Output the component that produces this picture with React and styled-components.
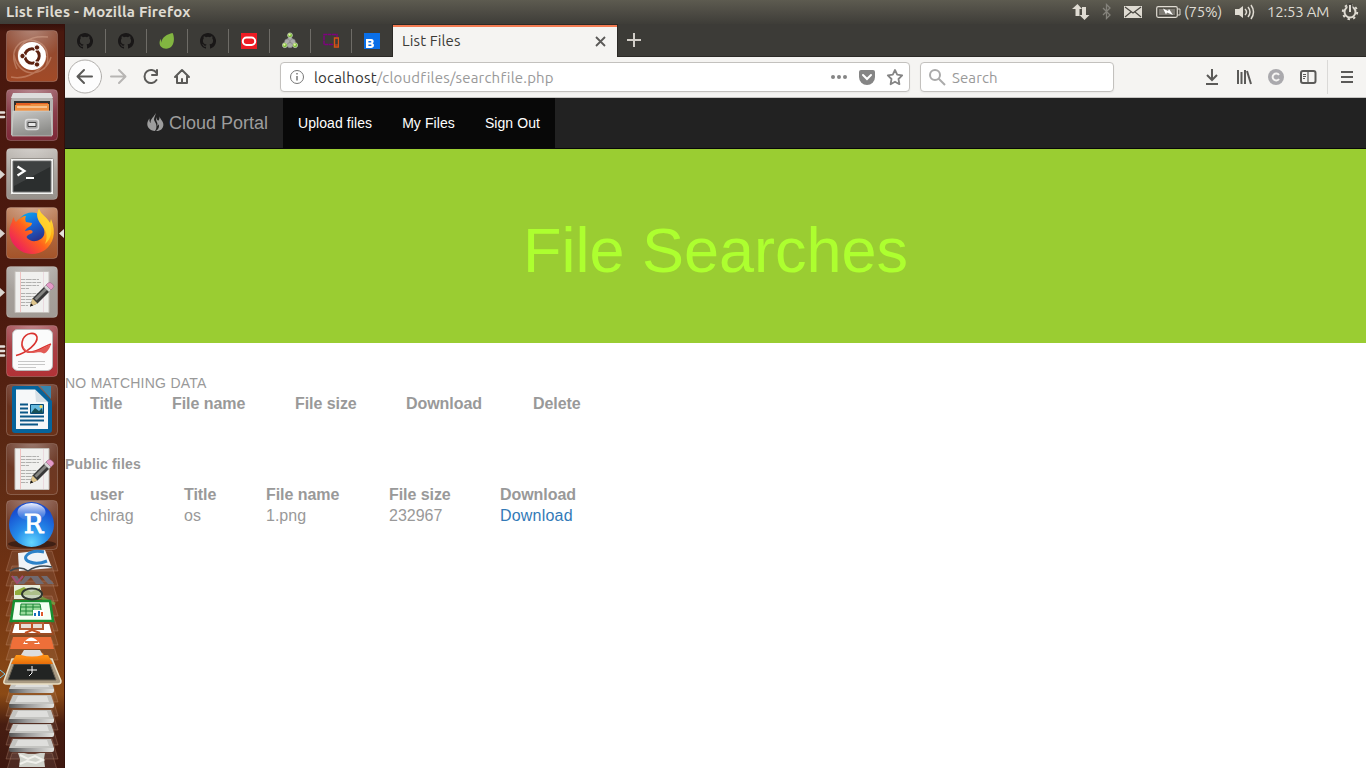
import React from "react";
import styled, { createGlobalStyle } from "styled-components";

const Global = createGlobalStyle`
  * { box-sizing: border-box; }
  body { margin: 0; background: #fff; overflow: hidden; }
  svg { display: block; flex: none; }
`;

const ui = `"Ubuntu", "Noto Sans", sans-serif`;
const page = `"Liberation Sans", Arial, sans-serif`;

const Desktop = styled.div`
  width: 1366px;
  height: 768px;
  display: flex;
  flex-direction: column;
`;
const Panel = styled.header`
  height: 24px;
  flex: none;
  display: flex;
  align-items: center;
  justify-content: space-between;
  padding: 0 7px 0 6px;
  background: linear-gradient(#5d5b50, #4c4a43 55%, #3e3d38);
  color: #dfdbd2;
  font: 15px/24px ${ui};
  white-space: nowrap;
`;
const WindowTitle = styled.span`
  font-weight: 700;
  letter-spacing: 0.18px;
`;
const Indicators = styled.div`
  display: flex;
  align-items: center;
`;
const Slot = styled.span`
  display: block;
  flex: none;
  width: ${(p) => p.$w}px;
  letter-spacing: ${(p) => p.$ls || 0}px;
`;
const Main = styled.div`
  display: flex;
  flex: 1;
  min-height: 0;
`;
const Dock = styled.nav`
  width: 65px;
  flex: none;
  padding-top: 6px;
  overflow: hidden;
  border-right: 1px solid #34110b;
  background: linear-gradient(#35100a 0, #49180e 8px, #4b190e 280px, #5c2a14 440px, #713313 560px, #8b4a15 670px, #471d11 700px, #3e1810);
`;
const DockItem = styled.div`
  height: ${(p) => p.$h || 59}px;
  display: flex;
`;
const Browser = styled.section`
  flex: 1;
  min-width: 0;
  display: flex;
  flex-direction: column;
`;
const TabStrip = styled.div`
  height: 33px;
  flex: none;
  display: flex;
  background: #3c3b37;
  box-shadow: inset 0 -1px #2b2926;
`;
const PinnedTab = styled.div`
  width: 41px;
  flex: none;
  height: 33px;
  display: flex;
  align-items: center;
  justify-content: center;
  padding-right: 1px;
  background: linear-gradient(#6e6c67, #6e6c67) right 5px / 1px 24px no-repeat;
  &:last-of-type { background: none; }
`;
const Pins = styled.div`
  display: flex;
  width: 327px;
`;
const ActiveTab = styled.div`
  width: 226px;
  height: 33px;
  border: solid #2b2926;
  border-width: 1px 1px 0;
  display: flex;
  align-items: center;
  justify-content: space-between;
  padding: 0 11px 0 9px;
  background: linear-gradient(#f37b52 2px, #f5f4f2 2px);
  color: #3c3b37;
  font: 15px/32px ${ui};
  letter-spacing: 0.12px;
`;
const NewTab = styled.div`
  padding: 8px 0 0 8px;
`;
const Toolbar = styled.div`
  height: 41px;
  flex: none;
  display: flex;
  align-items: center;
  background: #f5f4f2;
  border-bottom: 1px solid #c5c4c2;
  font: 15px/28px ${ui};
`;
const NavButtons = styled.div`
  width: 215px;
  display: flex;
  padding-left: 3px;
`;
const Field = styled.div`
  height: 30px;
  width: ${(p) => p.$w}px;
  margin-right: 10px;
  border: 1px solid #c3c1be;
  border-radius: 4px;
  background: #fff;
  display: flex;
  align-items: center;
  padding-left: ${(p) => p.$inset || 0}px;
  color: #999;
  box-shadow: 0 1px 2px #0000000d;
  white-space: nowrap;
`;
const Address = styled.span`
  flex: 1;
  margin-left: 9px;
  padding-top: 1px;
  letter-spacing: 0.19px;
  b { font-weight: 400; color: #333; }
`;
const SearchHint = styled.span`
  margin-left: 6px;
  padding-top: 1px;
  letter-spacing: 0.1px;
`;
const ToolbarActions = styled.div`
  flex: 1;
  height: 34px;
  display: flex;
  align-items: center;
  justify-content: flex-end;
  gap: 16px;
`;
const MenuButton = styled.div`
  height: 34px;
  padding: 9px 12px 0 10px;
  margin-left: -6px;
  border-left: 1px solid #dad9d7;
`;
const Navbar = styled.nav`
  height: 51px;
  flex: none;
  display: flex;
  padding-left: 82px;
  background: #222;
  border-bottom: 1px solid #080808;
  color: #fff;
  font: 14px/50px ${page};
`;
const Brand = styled.a`
  display: flex;
  align-items: center;
  gap: 5px;
  width: 136px;
  font-size: 18px;
  color: #9d9d9d;
  white-space: nowrap;
  svg { margin-bottom: 2px; }
`;
const NavLink = styled.a`
  padding: 0 15px;
  background: #080808;
  letter-spacing: 0.08px;
`;
const Hero = styled.div`
  height: 194px;
  flex: none;
  background: #9acd32;
  text-align: center;
  padding-top: 66px;
`;
const HeroTitle = styled.h1`
  margin: 0;
  font: 400 63px/70px ${page};
  color: #adff2f;
`;
const Content = styled.main`
  padding-top: 30px;
  font: 14px/20px ${page};
  color: #999;
`;
const Caption = styled.p`
  margin: ${(p) => p.$m || 0};
  font-weight: ${(p) => (p.$bold ? 700 : 400)};
  letter-spacing: ${(p) => (p.$bold ? 0.16 : 0.25)}px;
`;
const Table = styled.table`
  border-collapse: collapse;
  table-layout: fixed;
  width: 1px;
  font-size: 16px;
  line-height: 21px;
  white-space: nowrap;
  th, td { padding: 0 0 0 25px; text-align: left; }
  th { letter-spacing: -0.06px; }
`;
const Col = styled.col`
  width: ${(p) => p.$w}px;
`;
const DownloadLink = styled.a`
  color: #337ab7;
  letter-spacing: 0.2px;
`;

const catPath =
  "M8 0C3.58 0 0 3.58 0 8c0 3.54 2.29 6.53 5.47 7.59.4.07.55-.17.55-.38v-1.49c-2.23.48-2.7-.95-2.7-.95-.36-.92-.89-1.17-.89-1.17-.73-.5.05-.49.05-.49.8.06 1.23.83 1.23.83.72 1.23 1.88.87 2.34.67.07-.52.28-.87.5-1.07-1.77-.2-3.64-.89-3.64-3.95 0-.87.31-1.59.82-2.15-.08-.2-.36-1.02.08-2.12 0 0 .67-.21 2.2.82a7.6 7.6 0 0 1 4 0c1.53-1.04 2.2-.82 2.2-.82.44 1.1.16 1.92.08 2.12.51.56.82 1.27.82 2.15 0 3.07-1.87 3.75-3.65 3.95.29.25.54.73.54 1.48v2.19c0 .21.15.46.55.38A8 8 0 0 0 8 0z";
const Cat = () => <svg width="16" height="16" viewBox="0 0 16 16"><path d={catPath} fill="#191717" /></svg>;

const pins = [
  <Cat />,
  <Cat />,
  <svg width="16" height="16"><path d="M13.500 0c1.800 2.400 2.200 9.500-.6 13-2.800 3.600-8.300 3.500-10.800.8-2-2-2-5.400-.4-8l.5 4C2.600 4.600 8.500.8 13.500 0z" fill="#82b541" /></svg>,
  <Cat />,
  <svg width="16" height="16"><path d="M0 0h16v16H0z" fill="#ed1c24" /><rect x="1.800" y="4.500" width="12.400" height="7.500" rx="3.700" fill="none" stroke="#fff" strokeWidth="2" /></svg>,
  <svg width="16" height="17" viewBox="0 0 17 17"><g fill="#aaa" stroke="#777" strokeWidth=".5"><circle cx="8.500" cy="8" r="3" /><circle cx="5.500" cy="9.500" r="2.700" /><circle cx="11.500" cy="9.500" r="2.700" /><circle cx="8.500" cy="13.500" r="2.800" /></g><g fill="#79bd36" stroke="#c9cec3" strokeWidth=".8"><circle cx="8.500" cy="3" r="2.600" /><circle cx="3" cy="13.500" r="2.600" /><circle cx="14" cy="13.500" r="2.600" /></g><g fill="#e5f6a2"><circle cx="8" cy="2.300" r="1.200" /><circle cx="2.500" cy="13" r="1.200" /><circle cx="13.500" cy="13" r="1.200" /></g></svg>,
  <svg width="16" height="16" fill="none"><path d="M10 11.500H1V1.500h13V4" stroke="#800080" strokeWidth="1.400" strokeDasharray="4 .5" /><path d="M11.500 5h4v9h-4z" stroke="#d95216" strokeWidth="1.400" /><path d="M11 12h5" stroke="#d95216" /></svg>,
  <svg width="16" height="16"><path d="M0 0h16v16H0z" fill="#0a6fe8" /><path fillRule="evenodd" d="M2 6h5.200c3 0 3.200 3.700 1.300 4.300 2.500.8 1.700 4.700-1.300 4.700H2zm2.400 1.900v1.700H6.600c1-.1 1-1.600 0-1.700zm0 3.500V13h2.400c1-.1 1-1.500 0-1.600z" fill="#fff" /></svg>,
];

const Tile = ({ a, b, marks = 0, focus, children, h = 52 }) => (
  <svg width="64" height={h + 2} viewBox={`0 0 64 ${h + 2}`}>
    {marks === 1 && <path d="M0 22l5 4.500L0 31z" fill="#d9d4cf" />}
    {marks === 2 && <path d="M0 23.500h4M0 28h4" stroke="#e5dfda" strokeWidth="2.600" strokeLinecap="round" />}
    {marks === 3 && <path d="M0 21.500h4M0 26h4M0 30.500h4" stroke="#e5dfda" strokeWidth="2.600" strokeLinecap="round" />}
    {focus && <path d="M64 22l-5 4.500 5 4.500z" fill="#e5dfda" />}
    <defs>
      <linearGradient id={`tile${a.slice(1)}${b.slice(1)}`} x2="0" y2="1"><stop stopColor={a} /><stop offset="1" stopColor={b} /></linearGradient>
      <radialGradient id="gloss" cx=".5" cy="-.1" r=".7"><stop stopColor="#fff" stopOpacity=".35" /><stop offset="1" stopColor="#fff" stopOpacity="0" /></radialGradient>
    </defs>
    <rect x="6.500" y=".5" width="51" height={h - 1} rx="4" fill={`url(#tile${a.slice(1)}${b.slice(1)})`} stroke="#ffffff35" />
    <rect x="7" y="1" width="50" height={h - 2} rx="3" fill="url(#gloss)" />
    {children}
  </svg>
);

const Notepad = () => (
  <g>
    <path d="M15 5.500h34v41H15z" fill="#f0f0ee" stroke="#c4c0bb" />
    <path d="M20.500 6v40" stroke="#efc2c0" /><path d="M43.500 6v40" stroke="#ead9de" />
    <path d="M21 13.500h18M21 16.500h20M21 19.500h18M21 22.500h8M21 27.500h20M21 30.500h16M21 33.500h20M21 36.500h14M21 39.500h7" stroke="#b0b0ae" strokeDasharray="4 .7 6 .6" />
    <path d="M30 40.500l2.500-8 14-14 5 5-14 14z" fill="#383838" />
    <path d="M34.500 32.500l12.500-12.500 2 2-12.500 12.500z" fill="#858582" />
    <path d="M30 40.500l2.500-8 5 5z" fill="#dec58c" /><path d="M30 40.500l1-3.300 2.300 2.300z" fill="#171717" />
    <path d="M44 21l2.500-2.500 5 5-2.500 2.500z" fill="#d5d5d5" />
    <path d="M46 19l2-2q2-1.500 4.500 1t.5 4l-2 2z" fill="#e39ac7" stroke="#8f587b" strokeWidth=".5" />
  </g>
);

const UbuntuIcon = () => (
  <Tile a="#8c4a34" b="#a24a27">
    <g fill="none" stroke="#e6b9a1" opacity=".4" strokeWidth="1.500"><path d="M17 39C7 18 23 5 38 12c11 4 12 20 6 27M14 25c5 24 31 23 37 2M11 47c14 3 34-6 35-21M48 7C30 5 13 14 20 34" /></g>
    <circle cx="32" cy="26" r="14" fill="#fff" />
    <circle cx="32" cy="26" r="7.200" fill="none" stroke="#5c2110" strokeWidth="3" />
    <path d="M32 26h-10M32 26l5-9M32 26l5 9" stroke="#fff" strokeWidth="1.500" />
    <circle cx="32" cy="26" r="5.300" fill="#fff" />
    <g fill="#5c2110" stroke="#fff"><circle cx="22.500" cy="26" r="2.700" /><circle cx="37" cy="17.500" r="2.700" /><circle cx="37" cy="34.500" r="2.700" /></g>
  </Tile>
);
const FilesIcon = () => (
  <Tile a="#94505b" b="#7d2837" marks={2}>
    <defs><linearGradient id="cab" x2=".4" y2="1"><stop stopColor="#c9c9c7" /><stop offset="1" stopColor="#8d8d8a" /></linearGradient></defs>
    <path d="M13 5h38l2 6v35H11V11z" fill="#b5b5b2" /><path d="M13 4h38l2 5H11z" fill="#ddd" />
    <path d="M14 12h36v11H14z" fill="#30302e" /><path d="M16 14h32v9H16z" fill="#e45f22" /><path d="M15 16h15l1-1h18v8H15z" fill="#ef9141" /><path d="M17 18h30" stroke="#fff1d8" />
    <path d="M13 22h38l1 25H12z" fill="url(#cab)" stroke="#d8d8d4" strokeWidth=".6" />
    <rect x="25.500" y="30.500" width="13" height="10" rx="2.500" fill="#aaa" stroke="#ddd" strokeWidth="1.500" /><path d="M28 33.500h8v4h-8z" fill="#e7e7e7" stroke="#444" />
  </Tile>
);
const TerminalIcon = () => (
  <Tile a="#bcb7b1" b="#96908a" marks={1}>
    <rect x="10.500" y="10.500" width="43" height="36" rx="1" fill="#f3f3f1" stroke="#95918c" /><path d="M13 13h38v31H13z" fill="#2b2e2e" stroke="#777" /><path d="M14 14h36v5L14 38z" fill="#ffffff18" />
    <path d="M17.500 18.500l7 4.500-7 4.500" fill="none" stroke="#fff" strokeWidth="2.200" /><path d="M26 30h8" stroke="#fff" strokeWidth="2" />
  </Tile>
);
const FirefoxIcon = () => (
  <Tile a="#bd7f5a" b="#a45329" marks={1} focus>
    <defs>
      <linearGradient id="fox" x1=".95" y1="0" x2=".1" y2=".85"><stop stopColor="#fff44a" /><stop offset=".35" stopColor="#ffae16" /><stop offset=".6" stopColor="#ff621c" /><stop offset="1" stopColor="#ec1b61" /></linearGradient>
      <linearGradient id="globe" x2=".5" y2="1"><stop stopColor="#0ab5ee" /><stop offset=".5" stopColor="#1669d9" /><stop offset="1" stopColor="#29328b" /></linearGradient>
    </defs>
    <circle cx="32" cy="21" r="15.500" fill="url(#globe)" />
    <path d="M14 10c0 3 1 4 2 5l1-1c2-3 6-5 9-5-1 2-1 4 0 6l6 1c0 4-6 4-7 8l5-1c3 0 4 3 0 4-2 1-4 2-3 4 4 5 14 4 17-3 2-6-3-11-5-14-3-5-2-9 0-12 2 6 8 8 11 14l1-4c6 14 2 25-6 31-9 6-21 5-28-2C8 33 8 21 12 15q0-3 2-5z" fill="url(#fox)" />
    <path d="M39 2c2 6 8 8 11 14 3 8 1 16-5 21 2-5 3-11-2-17-5-6-7-11-4-18z" fill="#ffd52f" opacity=".8" />
  </Tile>
);
const ReaderIcon = () => (
  <Tile a="#a14a50" b="#b23236" marks={3}>
    <rect x="12.500" y="4.500" width="40" height="41" rx="5" fill="#fbfbfb" stroke="#bbb" />
    <path d="M16 30.500c11-3 22-12 21-18.500-2-6-11-4-14 2-3 8 1 14 8 13 7 0 13-6 20-8" fill="none" stroke="#d9322e" strokeWidth="1.600" />
    <path d="M24 13c-3 7 0 13 7 13.500 8 0 13-5 20-7-2 5-4 8-7 9-4-2-6-1-11-.5-9 0-13-6-9-15z" fill="#e25a55" />
    <path d="M18 36.500h27M18 39.500h27M18 42.500h18" stroke="#c7c7c7" />
  </Tile>
);
const WriterIcon = () => (
  <Tile a="#693424" b="#6b3219">
    <path d="M14 2h24l14 15v29q0 3-3 3H15q-3 0-3-3V4q0-2 2-2z" fill="#06649c" /><path d="M40 2h11v13z" fill="#3685af" /><path d="M16 5.500h19l13 13V45H16z" fill="#f6f8f9" /><path d="M35 5.500l1 12.500h12z" fill="#d7e0e6" />
    <path d="M20 20.500h8M20 24.500h8M20 28.500h8M20 32.500h24M20 36.500h24M20 40.500h18" stroke="#0a5787" strokeWidth="2" />
    <path d="M30.500 20.500h13v9h-13z" fill="#65b9de" stroke="#064b77" /><path d="M31 29l4-5 4 3 3-3 1 5z" fill="#174f55" /><circle cx="41" cy="22.500" r="1.500" fill="#f8d45b" />
  </Tile>
);
const RIcon = () => (
  <Tile a="#7a4635" b="#6a351d" h={50}>
    <defs><radialGradient id="ball" cx=".5" cy=".9" r=".8"><stop stopColor="#65d7ff" /><stop offset=".45" stopColor="#248cea" /><stop offset="1" stopColor="#174ccf" /></radialGradient><linearGradient id="shine" x2="0" y2="1"><stop stopColor="#f3f6ff" /><stop offset="1" stopColor="#80a6f2" stopOpacity=".1" /></linearGradient></defs>
    <ellipse cx="32" cy="44" rx="24" ry="4" fill="#351a12" opacity=".8" />
    <circle cx="31.500" cy="24.500" r="22.500" fill="url(#ball)" /><ellipse cx="31.500" cy="12" rx="14" ry="9" fill="url(#shine)" />
    <text x="33.500" y="33" textAnchor="middle" fill="#fff" stroke="#fff" strokeWidth=".8" fontFamily="DejaVu Serif" fontSize="26">R</text>
  </Tile>
);

const Folded = () => (
  <svg width="64" height="220" viewBox="0 0 64 220">
    <defs><linearGradient id="drive"><stop stopColor="#555" /><stop offset=".4" stopColor="#999" /><stop offset="1" stopColor="#e2e2df" /></linearGradient><linearGradient id="vlc" x2="0" y2="1"><stop stopColor="#ff9b18" /><stop offset="1" stopColor="#e66c0a" /></linearGradient></defs>
    {[2, 17, 32, 47, 62, 76, 91, 133, 147, 161, 176, 190, 204].map((y) => <path key={y} d={`M12 ${y}h40l6 20H6z`} fill="#ffffff13" stroke="#d7a28945" />)}
    <path d="M18 4l27-3 7 18-33 3z" fill="#eff3f7" /><path d="M44 3c-16-3-24 7-14 10q7 3 17-1" fill="none" stroke="#2d82c8" strokeWidth="3" /><path d="M10 22q10-6 18 0 10-7 24-4" fill="none" stroke="#3d474e" strokeWidth="1.500" />
    <path d="M11 27h6l4 6 4-6h7l-8 8h-7zM30 27h8l6 8h-8zM41 27h6l7 8h-6z" fill="#706a70" /><path d="M12 27l5 7 6-7" fill="none" stroke="#a54c72" strokeWidth="2" />
    <path d="M14 36h26l3 14H14z" fill="#e6ecd8" /><path d="M15 42l9-4 7 5 9-4v7H15z" fill="#91ad3c" /><path d="M40 48l15 7" stroke="#75943e" strokeWidth="3" />
    <path d="M14 52h36l3 20H11z" fill="#f5fff3" stroke="#178f31" strokeWidth="2.500" /><path d="M21 55h19l2 11H20zM20 58h20M20 62h20M26 55v11M33 55v11" fill="#98db9b" stroke="#188434" /><path d="M33 61h11v7H33z" fill="#fff" /><path d="M35 64v3M39 62v5" stroke="#146ebe" strokeWidth="2" /><path d="M42 63v4" stroke="#df5b2a" strokeWidth="2" />
    <ellipse cx="32" cy="45" rx="10" ry="5.500" fill="#bbc8b0aa" stroke="#303630" strokeWidth="2" />
    <path d="M14 74h36l3 11H11z" fill="#fff" stroke="#9b4b23" strokeWidth="2" /><path d="M20 74h23v6H20z" fill="#e8dfd5" stroke="#b65e34" strokeWidth="2" /><path d="M32 74v7M25 84l7-3 8 3" stroke="#c35324" strokeWidth="2" fill="none" />
    <path d="M13 88h38l3 12H10z" fill="#ee6f39" /><path d="M23 95q8-13 17 0h-5q-4-5-8 0z" fill="#fff" /><path d="M25 93h13" stroke="#e2733e" strokeWidth="2" />
    {[131, 146, 161, 175, 190].map((y) => <g key={y}><path d={`M13 ${y}h38l3 9H9z`} fill="#c4c4c1" /><path d={`M18 ${y + 1}h29l2 6H15z`} fill="#dededc" /><path d={`M9 ${y + 9}h45v2q0 2-2 2H11q-2 0-2-2z`} fill="url(#drive)" /></g>)}
    <path d="M12 110h40l9 22q0 3-3 3H7q-4 0-3-3z" fill="#a99a82" stroke="#eadfc4" strokeWidth="1.500" /><path d="M14 115h36l6 16H8z" fill="#222423" stroke="#665f50" /><path d="M16 106h32l5 9H11z" fill="url(#vlc)" /><path d="M22 104h21l2 5H20z" fill="#ff8a13" /><path d="M24 101h16l3 5q-11 3-22 0z" fill="#ddd" /><path d="M27 121h10M32 117v7l-3 3" stroke="#fff" />
    <path d="M0 121l5 4-5 4" fill="none" stroke="#77cbec" />
    <path d="M18 204h6l4 1h7l5-1h5l-1 6 1 8H19l1-8z" fill="#d0d2cb" /><path d="M20 206l8 4 7-3 8 4-7 3-9-2-7 3" fill="none" stroke="#f1f1ec" strokeWidth="2" />
  </svg>
);

const stroke = { fill: "none", stroke: "#5b5a58", strokeWidth: 2 };

export default function App() {
  return (
    <Desktop>
      <Global />
      <Panel>
        <WindowTitle>List Files - Mozilla Firefox</WindowTitle>
        <Indicators>
          <Slot $w={30}><svg width="18" height="18" fill="#dfdbd2"><path d="M5.500 1L10 6H7.500v7h-4V6H0zM12.500 17l-5-5H10V4h4v8h3.500z" /></svg></Slot>
          <Slot $w={22}><svg width="10" height="18" fill="none" stroke="#85837c" strokeWidth="1.300"><path d="M1 5l7 7-3.500 3.500v-14L8 5l-7 7" /></svg></Slot>
          <Slot $w={32}><svg width="19" height="14"><path d="M0 1h18v12H0z" fill="#dfdbd2" /><path d="M1 2l8 6 8-6M1 12l6-5M17 12l-6-5" fill="none" stroke="#4a4842" strokeWidth="1.200" /></svg></Slot>
          <Slot $w={28}><svg width="25" height="14"><rect x=".7" y="1.700" width="20.600" height="10.600" rx="1.500" fill="none" stroke="#dfdbd2" strokeWidth="1.200" /><path d="M22 4h2v6h-2" fill="none" stroke="#dfdbd2" /><path d="M3 4h16v6H3z" fill="#7d7a73" /><path d="M7 3.500l5 2.500 1-2 4 6-6-2.500-1 2z" fill="#fff" /></svg></Slot>
          <Slot $w={50} $ls={-0.2}>(75%)</Slot>
          <Slot $w={33}><svg width="21" height="16"><path d="M1 5h4l4-3v12l-4-3H1z" fill="#dfdbd2" /><path d="M11 5q3 3 0 6M14 3q4 5 0 10M17 1q5 7 0 14" fill="none" stroke="#dfdbd2" strokeWidth="1.500" /></svg></Slot>
          <Slot $w={74} $ls={-0.2}>12:53 AM</Slot>
          <svg width="18" height="18" fill="none" stroke="#dfdbd2"><circle cx="9" cy="9" r="5.500" strokeWidth="2" /><circle cx="9" cy="9" r="7.200" strokeWidth="2" strokeDasharray="2.400 3.250" /><path d="M9 0v9" stroke="#4a4842" strokeWidth="5" /><path d="M9 2v7" strokeWidth="2" /></svg>
        </Indicators>
      </Panel>
      <Main>
        <Dock>
          <DockItem><UbuntuIcon /></DockItem>
          <DockItem><FilesIcon /></DockItem>
          <DockItem><TerminalIcon /></DockItem>
          <DockItem><FirefoxIcon /></DockItem>
          <DockItem><Tile a="#aaa5a0" b="#a19b95" marks={1}><Notepad /></Tile></DockItem>
          <DockItem><ReaderIcon /></DockItem>
          <DockItem><WriterIcon /></DockItem>
          <DockItem $h={57}><Tile a="#693827" b="#71381f"><Notepad /></Tile></DockItem>
          <DockItem $h={49}><RIcon /></DockItem>
          <Folded />
        </Dock>
        <Browser>
          <TabStrip>
            <Pins>{pins.map((icon, i) => <PinnedTab key={i}>{icon}</PinnedTab>)}</Pins>
            <ActiveTab>
              List Files
              <svg width="11" height="11" {...stroke} strokeWidth="1.800"><path d="M1 1l9 9M10 1l-9 9" /></svg>
            </ActiveTab>
            <NewTab><svg width="16" height="16" fill="none" stroke="#d2cec8" strokeWidth="2"><path d="M8 1v14M1 8h14" /></svg></NewTab>
          </TabStrip>
          <Toolbar>
            <NavButtons>
              <svg width="124" height="36" {...stroke} strokeLinecap="round" strokeLinejoin="round">
                <circle cx="17" cy="17.500" r="16.500" fill="#fdfdfd" stroke="#b0aeab" strokeWidth="1" />
                <path d="M10 17.500h14M16 11l-6.500 6.500L16 24" />
                <path d="M43 17.500h14M51 11l6.500 6.500L51 24" stroke="#b7b5b3" />
                <path d="M88.500 14A6.500 6.500 0 1 0 88.500 21M89 11v5h-5" />
                <path d="M107 18l7-7 7 7M109 17.500V24h10v-6.500M114 24v-4" />
              </svg>
            </NavButtons>
            <Field $w={630} $inset={8}>
              <svg width="16" height="16" fill="none" stroke="#777"><circle cx="8" cy="8" r="6.500" /><path d="M8 7v4.500M8 4v1.500" strokeWidth="1.500" /></svg>
              <Address><b>localhost</b>/cloudfiles/searchfile.php</Address>
              <svg width="78" height="18" fill="#858585"><circle cx="2" cy="9" r="2" /><circle cx="8" cy="9" r="2" /><circle cx="14" cy="9" r="2" /><path d="M30 2h12q2 0 2 2v5a8 8 0 0 1-16 0V4q0-2 2-2z" /><path d="M32 7l4 4 4-4" fill="none" stroke="#fff" strokeWidth="2" strokeLinecap="round" /><path d="M64 2l2.200 4.700 5 .7-3.700 3.600.9 5.200-4.400-2.500-4.400 2.500.9-5.200-3.700-3.600 5-.7z" fill="none" stroke="#858585" strokeWidth="1.800" strokeLinejoin="round" /></svg>
            </Field>
            <Field $w={194}>
              <svg width="25" height="18" fill="none" stroke="#aaa" strokeWidth="2"><circle cx="14" cy="7" r="5" /><path d="M17.500 10.500L24 17" /></svg>
              <SearchHint>Search</SearchHint>
            </Field>
            <ToolbarActions>
              <svg width="16" height="16" {...stroke}><path d="M8 0v11M3 6l5 5 5-5M2 15h12" /></svg>
              <svg width="16" height="16" {...stroke}><path d="M2 1v14M5.500 3v12M9 1v14M11 2l4 13" /></svg>
              <svg width="16" height="16"><circle cx="8" cy="8" r="8" fill="#aaa9ad" /><path d="M11 6a3.500 3.500 0 1 0 0 4" fill="none" stroke="#f5f4f2" strokeWidth="2" /></svg>
              <svg width="17" height="16" {...stroke}><rect x="1" y="2" width="14.500" height="12" rx="2" /><path d="M8 2v12" strokeWidth="1.200" /><path d="M3 5.500h3M3 7.500h3M3 9.500h2" strokeWidth="1" /></svg>
              <MenuButton><svg width="16" height="16" {...stroke}><path d="M3 3h12M3 8h12M3 13h12" /></svg></MenuButton>
            </ToolbarActions>
          </Toolbar>
          <Navbar>
            <Brand>
              <svg width="17" height="19" fill="#9d9d9d"><path d="M8.500 0C9 3 6 5 7.500 8c2 3 3 6.500.5 10C3 17.500 0 14.500.3 10.500.5 8 1.500 7 2.500 5.500c-.2 2 0 3.500 1.200 4.500C3 5.500 7.500 4 8.500 0z" /><path d="M12.500 2.500c-.3 3 4.200 5.500 3.900 9.500-.3 4-3.400 6.300-7.400 6 2.500-1.700 3.600-4 2.800-7-.3 1-.8 1.500-1.600 1.700C11.500 9.500 8 8 9.300 4c0 1.700.7 3 1.900 3.800C12.500 6.500 12.700 4.500 12.500 2.500z" /></svg>
              Cloud Portal
            </Brand>
            <NavLink>Upload files</NavLink>
            <NavLink>My Files</NavLink>
            <NavLink>Sign Out</NavLink>
          </Navbar>
          <Hero><HeroTitle>File Searches</HeroTitle></Hero>
          <Content>
            <Caption>NO MATCHING DATA</Caption>
            <Table>
              <colgroup>{[82, 123, 111, 127, 100].map((w, i) => <Col key={i} $w={w} />)}</colgroup>
              <thead><tr>{["Title", "File name", "File size", "Download", "Delete"].map((h) => <th key={h}>{h}</th>)}</tr></thead>
            </Table>
            <Caption $bold $m="40px 0 10px">Public files</Caption>
            <Table>
              <colgroup>{[94, 82, 123, 111, 127].map((w, i) => <Col key={i} $w={w} />)}</colgroup>
              <thead><tr>{["user", "Title", "File name", "File size", "Download"].map((h) => <th key={h}>{h}</th>)}</tr></thead>
              <tbody><tr><td>chirag</td><td>os</td><td>1.png</td><td>232967</td><td><DownloadLink>Download</DownloadLink></td></tr></tbody>
            </Table>
          </Content>
        </Browser>
      </Main>
    </Desktop>
  );
}
